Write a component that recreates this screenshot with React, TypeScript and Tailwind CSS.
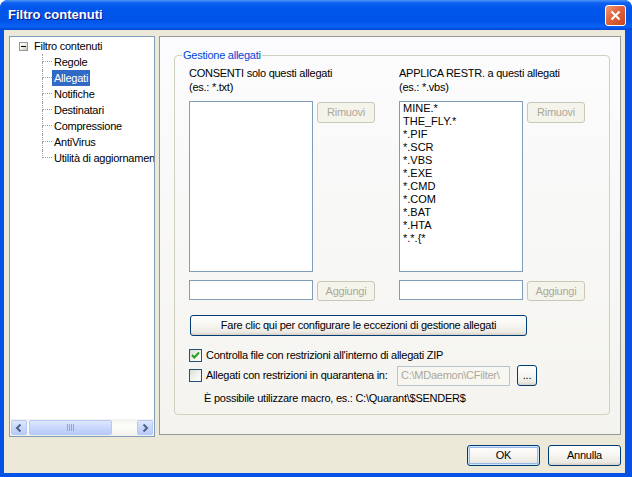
import React from "react"

const font = "font-['Liberation_Sans',Arial,sans-serif]"

interface TBtn {
  children: React.ReactNode
  disabled?: boolean
  def?: boolean
  className?: string
}

const XPButton: React.FC<TBtn> = ({ children, disabled, def, className }) => {
  if (disabled) {
    return (
      <div
        className={
          "flex items-center justify-center rounded-[3px] border border-[#c9c7ba] bg-[#f5f4ea] text-[11px] text-[#aca899] " +
          (className ?? "")
        }
      >
        {children}
      </div>
    )
  }
  return (
    <div
      className={
        "flex items-center justify-center rounded-[3px] border border-[#003c74] bg-[linear-gradient(180deg,#ffffff_0%,#f7f6f2_45%,#eceae3_85%,#d6d0c5_100%)] text-[11px] text-black " +
        (def ? "shadow-[inset_0_0_0_1px_#cee7ff,inset_0_0_0_2px_#98b8ea] " : "") +
        (className ?? "")
      }
    >
      {children}
    </div>
  )
}

const Checkbox: React.FC<{ checked?: boolean }> = ({ checked }) => (
  <div className="flex h-[13px] w-[13px] shrink-0 items-center justify-center border border-[#1c5180] bg-[linear-gradient(135deg,#dcdcd7_0%,#f4f4f0_60%,#ffffff_100%)]">
    {checked && (
      <svg width="11" height="11" viewBox="0 0 11 11">
        <path d="M2 5 L4.3 7.5 L9 2.5" fill="none" stroke="#21a121" strokeWidth="2" />
      </svg>
    )}
  </div>
)

const treeItems = [
  "Regole",
  "Allegati",
  "Notifiche",
  "Destinatari",
  "Compressione",
  "AntiVirus",
  "Utilità di aggiornamento",
]

const blocked = [
  "MINE.*",
  "THE_FLY.*",
  "*.PIF",
  "*.SCR",
  "*.VBS",
  "*.EXE",
  "*.CMD",
  "*.COM",
  "*.BAT",
  "*.HTA",
  "*.*.{*",
]

const ScrollArrow: React.FC<{ dir: "l" | "r" }> = ({ dir }) => (
  <div className="flex h-[15px] w-[16px] items-center justify-center rounded-[2px] border border-[#b6c8f4] bg-[linear-gradient(180deg,#dfe8fe_0%,#c8d7fc_50%,#b9cbf8_100%)]">
    <svg width="8" height="8" viewBox="0 0 8 8">
      {dir === "l" ? (
        <path d="M5.5 0.5 L2 4 L5.5 7.5" fill="none" stroke="#4d6185" strokeWidth="2" />
      ) : (
        <path d="M2.5 0.5 L6 4 L2.5 7.5" fill="none" stroke="#4d6185" strokeWidth="2" />
      )}
    </svg>
  </div>
)

const Column: React.FC<{ title: string; hint: string; items: string[] }> = ({ title, hint, items }) => (
  <div className="flex w-[210px] flex-col">
    <div className="leading-[14px]">
      <div>{title}</div>
      <div>{hint}</div>
    </div>
    <div className="mt-[7px] flex items-start">
      <div className="h-[171px] w-[124px] overflow-hidden border border-[#7f9db9] bg-white pl-[3px] leading-[13px] tracking-normal">
        {items.map((it) => (
          <div key={it}>{it}</div>
        ))}
      </div>
      <XPButton disabled className="ml-[4px] mt-[1px] h-[21px] w-[58px]">
        Rimuovi
      </XPButton>
    </div>
    <div className="mt-[8px] flex items-start">
      <div className="h-[20px] w-[124px] border border-[#7f9db9] bg-white" />
      <XPButton disabled className="ml-[4px] mt-[1px] h-[20px] w-[58px]">
        Aggiungi
      </XPButton>
    </div>
  </div>
)

export default function App() {
  return (
    <div className={"flex h-[477px] w-[632px] flex-col overflow-hidden rounded-t-[8px] bg-[#0553e6] text-[11px] text-black " + font}>
      {/* title bar */}
      <div className="flex h-[30px] items-center justify-between bg-[linear-gradient(180deg,#4a93f7_0%,#0d60f0_10%,#0055ea_28%,#0054e8_70%,#0a62f4_88%,#0046d6_100%)] pl-[8px] pr-[6px]">
        <span className="text-[13px] font-bold text-white [text-shadow:1px_1px_#0a1883]">Filtro contenuti</span>
        <div className="flex h-[21px] w-[21px] items-center justify-center rounded-[3px] border border-white bg-[linear-gradient(135deg,#f09a7a_0%,#e06a43_40%,#c8431b_100%)]">
          <svg width="13" height="13" viewBox="0 0 13 13">
            <path d="M2.5 2.5 L10.5 10.5 M10.5 2.5 L2.5 10.5" stroke="white" strokeWidth="2" />
          </svg>
        </div>
      </div>

      {/* body */}
      <div className="ml-[4px] mr-[7px] mb-[4px] flex flex-1 flex-col bg-[#ece9d8] pl-[5px] pr-[4px] pt-[6px] tracking-[-0.25px]">
        <div className="flex items-start gap-[4px]">
          {/* tree */}
          <div className="flex h-[401px] w-[146px] flex-col border border-[#7f9db9] bg-white">
            <div className="flex-1 overflow-hidden whitespace-nowrap pt-[1px]">
              <div className="flex h-[16px] items-center">
                <div className="ml-[9px] flex h-[9px] w-[9px] items-center justify-center border border-[#919b9c] bg-[linear-gradient(135deg,#ffffff_0%,#f0efe8_50%,#c6c2b2_100%)]">
                  <div className="h-[1px] w-[5px] bg-black" />
                </div>
                <span className="ml-[6px]">Filtro contenuti</span>
              </div>
              {treeItems.map((it, i) => (
                <div key={it} className="flex h-[16px]">
                  <div className="w-[32px] shrink-0" />
                  <div className="flex w-[10px] shrink-0 flex-col">
                    <div className="h-[8px] border-b border-l border-dotted border-[#a0a0a0]" />
                    {i < treeItems.length - 1 ? (
                      <div className="flex-1 border-l border-dotted border-[#a0a0a0]" />
                    ) : (
                      <div className="flex-1" />
                    )}
                  </div>
                  <span
                    className={
                      i === 1
                        ? "h-[16px] bg-[#316ac5] px-[2px] leading-[16px] text-white"
                        : "h-[16px] px-[2px] leading-[16px]"
                    }
                  >
                    {it}
                  </span>
                </div>
              ))}
            </div>
            {/* horizontal scrollbar */}
            <div className="flex h-[17px] items-center bg-[linear-gradient(180deg,#f3f1ec_0%,#fefefb_40%,#f3f1ec_100%)] px-[1px]">
              <ScrollArrow dir="l" />
              <div className="ml-[2px] flex h-[15px] w-[83px] items-center justify-center rounded-[2px] border border-[#b6c8f4] bg-[linear-gradient(180deg,#dfe8fe_0%,#c8d7fc_50%,#b9cbf8_100%)]">
                <div className="flex gap-[1px]">
                  <div className="h-[7px] w-[1px] bg-[#8aa6e8]" />
                  <div className="h-[7px] w-[1px] bg-[#8aa6e8]" />
                  <div className="h-[7px] w-[1px] bg-[#8aa6e8]" />
                  <div className="h-[7px] w-[1px] bg-[#8aa6e8]" />
                </div>
              </div>
              <div className="flex-1" />
              <ScrollArrow dir="r" />
            </div>
          </div>

          {/* page */}
          <div className="h-[399px] flex-1 border border-[#919b9c] bg-[linear-gradient(180deg,#fcfcfe_0%,#f4f3ee_100%)] pl-[14px] pt-[12px]">
            <fieldset className="h-[366px] w-[431px] rounded-[4px] border border-[#d0d0bf]">
              <legend className="ml-[7px] px-[1px] leading-[13px] text-[#0046d5]">Gestione allegati</legend>
              <div className="pl-[14px] pt-[4px]">
                <div className="flex">
                  <Column title="CONSENTI solo questi allegati" hint="(es.: *.txt)" items={[]} />
                  <Column title="APPLICA RESTR. a questi allegati" hint="(es.: *.vbs)" items={blocked} />
                </div>
                <XPButton className="ml-[1px] mt-[14px] h-[21px] w-[337px]">
                  Fare clic qui per configurare le eccezioni di gestione allegati
                </XPButton>
                <div className="mt-[13px] flex h-[13px] items-center">
                  <Checkbox checked />
                  <span className="ml-[4px] leading-[13px]">Controlla file con restrizioni all'interno di allegati ZIP</span>
                </div>
                <div className="mt-[3px] flex h-[21px] items-center">
                  <div className="flex w-[208px] items-center">
                    <Checkbox />
                    <span className="ml-[4px] whitespace-nowrap">Allegati con restrizioni in quarantena in:</span>
                  </div>
                  <div className="flex h-[20px] w-[113px] items-center overflow-hidden whitespace-nowrap border border-[#b5c3d3] bg-[#f7f6f1] pl-[3px] text-[#aca899]">
                    C:\MDaemon\CFilter\
                  </div>
                  <XPButton className="ml-[7px] h-[21px] w-[20px]">...</XPButton>
                </div>
                <div className="mt-[5px] pl-[15px] leading-[14px]">È possibile utilizzare macro, es.: C:\Quarant\$SENDER$</div>
              </div>
            </fieldset>
          </div>
        </div>

        <div className="mt-[8px] flex justify-end gap-[8px]">
          <XPButton def className="h-[21px] w-[73px]">
            OK
          </XPButton>
          <XPButton className="h-[21px] w-[73px]">Annulla</XPButton>
        </div>
      </div>
    </div>
  )
}
